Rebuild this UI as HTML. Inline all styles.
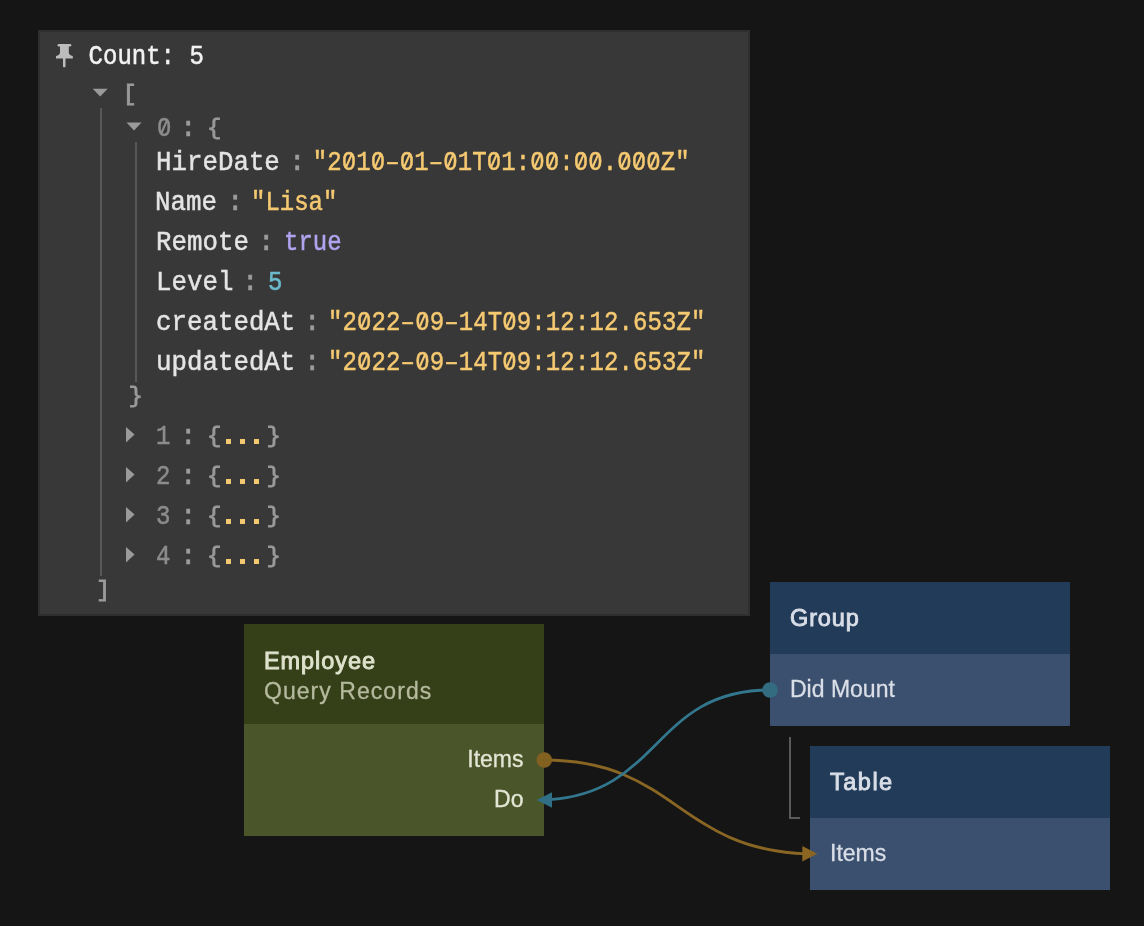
<!DOCTYPE html>
<html><head><meta charset="utf-8">
<style>
html,body{margin:0;padding:0;}
body{width:1144px;height:926px;overflow:hidden;position:relative;background:#151515;font-family:"Liberation Sans",sans-serif;}
.abs{position:absolute;}
#panel{position:absolute;left:38px;top:30px;width:712px;height:586px;box-sizing:border-box;border:2px solid #2f2f2f;background:#383838;}
.m{position:absolute;-webkit-text-stroke:0.45px currentColor;font-family:"Liberation Mono",monospace;font-size:24px;line-height:24px;white-space:pre;transform:scaleY(1.15);transform-origin:0 18.4px;}
.k{font-size:25.8px;line-height:24px;color:#e4e4e4;transform:scaleY(1.1);}
.g{color:#9a9a9a;}
.ns{transform:none;}
.c{color:#9c9c9c;font-weight:bold;}
.d{color:#8c8c8c;}
.br{transform:scaleY(0.9);-webkit-text-stroke:0.85px currentColor;}
.dot{position:absolute;width:5.2px;height:5.2px;background:#f3c870;}
.s{color:#f5c971;}
.t{color:#b0a4ef;}
.n{color:#6cbccd;}
.vl{position:absolute;width:2px;background:#585858;}
.node{position:absolute;width:300px;}
.nt{position:absolute;white-space:pre;font-family:"Liberation Sans",sans-serif;}
.tt{font-weight:normal!important;-webkit-text-stroke:0.9px currentColor;}
.pl{-webkit-text-stroke:0.3px currentColor;}
</style></head><body>
<div id="wrap" style="position:absolute;left:0;top:0;width:1144px;height:926px;will-change:transform">
<div id="panel"></div>
<!-- pin icon -->
<svg class="abs" style="left:50px;top:40px" width="30" height="30" viewBox="0 0 30 30">
  <path d="M7.2 5.2 L8.3 3.9 L20.6 3.9 L21.6 5.2 L20.6 6.5 L18.8 6.5 L18.8 12.2 Q18.9 15.6 22.8 15.9 L22.8 18.5 L15.5 18.5 L15.5 26.8 Q14.25 27.8 13 26.8 L13 18.5 L6 18.5 L6 15.9 Q9.9 15.6 10 12.2 L10 6.5 L8.3 6.5 Z" fill="#bcbcbc"/>
</svg>
<div class="m" style="left:88.6px;top:46px;color:#f2f2f2">Count: 5</div>
<!-- tri down 1 -->
<svg class="abs" style="left:92px;top:88px" width="17" height="10"><path d="M0.7 0.7 H15.7 L8.2 8.6 Z" fill="#9a9a9a"/></svg>
<div class="m g br" style="left:122.5px;top:81.5px">[</div>
<div class="vl" style="left:100px;top:108px;height:468px"></div>
<svg class="abs" style="left:126px;top:122px" width="17" height="10"><path d="M0.5 0.5 H15.5 L8 8.4 Z" fill="#9a9a9a"/></svg>
<div class="m d" style="left:157px;top:118px">0</div>
<div class="m c" style="left:181px;top:118px">:</div>
<div class="m g br" style="left:207px;top:116px">{</div>
<div class="vl" style="left:134.5px;top:142px;height:240px"></div>

<div class="m k" style="left:156px;top:152px">HireDate</div><div class="m c" style="left:290px;top:152px">:</div><div class="m s" style="left:312.7px;top:152px;letter-spacing:0.1px">"2010&#8211;01&#8211;01T01:00:00.000Z"</div>
<div class="m k" style="left:155px;top:192px">Name</div><div class="m c" style="left:228px;top:192px">:</div><div class="m s" style="left:251px;top:192px">"Lisa"</div>
<div class="m k" style="left:156px;top:232px">Remote</div><div class="m c" style="left:259px;top:232px">:</div><div class="m t" style="left:284px;top:232px">true</div>
<div class="m k" style="left:156px;top:272px">Level</div><div class="m c" style="left:243px;top:272px">:</div><div class="m n" style="left:268px;top:272px">5</div>
<div class="m k" style="left:156px;top:312px">createdAt</div><div class="m c" style="left:305px;top:312px">:</div><div class="m s" style="left:328px;top:312px;letter-spacing:0.12px">"2022&#8211;09&#8211;14T09:12:12.653Z"</div>
<div class="m k" style="left:156px;top:352px">updatedAt</div><div class="m c" style="left:305px;top:352px">:</div><div class="m s" style="left:328px;top:352px;letter-spacing:0.12px">"2022&#8211;09&#8211;14T09:12:12.653Z"</div>
<div class="m g br" style="left:128.5px;top:383.5px">}</div>

<svg class="abs" style="left:126px;top:427px" width="10" height="17"><path d="M0 0 L8.6 7.6 L0 15.4 Z" fill="#9a9a9a"/></svg>
<div class="m d" style="left:156px;top:426px">1</div><div class="m c" style="left:181px;top:426px">:</div><div class="m g br" style="left:207px;top:424px">{</div><div class="dot" style="left:225.5px;top:438.6px"></div><div class="dot" style="left:239.8px;top:438.6px"></div><div class="dot" style="left:254.3px;top:438.6px"></div><div class="m g br" style="left:266.5px;top:424px">}</div>
<svg class="abs" style="left:126px;top:467px" width="10" height="17"><path d="M0 0 L8.6 7.6 L0 15.4 Z" fill="#9a9a9a"/></svg>
<div class="m d" style="left:156px;top:466px">2</div><div class="m c" style="left:181px;top:466px">:</div><div class="m g br" style="left:207px;top:464px">{</div><div class="dot" style="left:225.5px;top:478.6px"></div><div class="dot" style="left:239.8px;top:478.6px"></div><div class="dot" style="left:254.3px;top:478.6px"></div><div class="m g br" style="left:266.5px;top:464px">}</div>
<svg class="abs" style="left:126px;top:507px" width="10" height="17"><path d="M0 0 L8.6 7.6 L0 15.4 Z" fill="#9a9a9a"/></svg>
<div class="m d" style="left:156px;top:506px">3</div><div class="m c" style="left:181px;top:506px">:</div><div class="m g br" style="left:207px;top:504px">{</div><div class="dot" style="left:225.5px;top:518.6px"></div><div class="dot" style="left:239.8px;top:518.6px"></div><div class="dot" style="left:254.3px;top:518.6px"></div><div class="m g br" style="left:266.5px;top:504px">}</div>
<svg class="abs" style="left:126px;top:547px" width="10" height="17"><path d="M0 0 L8.6 7.6 L0 15.4 Z" fill="#9a9a9a"/></svg>
<div class="m d" style="left:156px;top:546px">4</div><div class="m c" style="left:181px;top:546px">:</div><div class="m g br" style="left:207px;top:544px">{</div><div class="dot" style="left:225.5px;top:558.6px"></div><div class="dot" style="left:239.8px;top:558.6px"></div><div class="dot" style="left:254.3px;top:558.6px"></div><div class="m g br" style="left:266.5px;top:544px">}</div>
<div class="m g br" style="left:96px;top:577.5px">]</div>

<!-- slashed zeros -->
<svg class="abs" style="left:0;top:0;pointer-events:none" width="1144" height="926">
<rect x="162.20" y="123.90" width="4.2" height="5.2" fill="#383838"/>
<line x1="161.50" y1="133.00" x2="167.10" y2="120.10" stroke="#8c8c8c" stroke-width="2.1"/>
<rect x="346.89" y="157.90" width="4.2" height="5.2" fill="#383838"/>
<line x1="346.19" y1="167.00" x2="351.79" y2="154.10" stroke="#f5c971" stroke-width="2.1"/>
<rect x="375.89" y="157.90" width="4.2" height="5.2" fill="#383838"/>
<line x1="375.19" y1="167.00" x2="380.79" y2="154.10" stroke="#f5c971" stroke-width="2.1"/>
<rect x="404.89" y="157.90" width="4.2" height="5.2" fill="#383838"/>
<line x1="404.19" y1="167.00" x2="409.79" y2="154.10" stroke="#f5c971" stroke-width="2.1"/>
<rect x="448.40" y="157.90" width="4.2" height="5.2" fill="#383838"/>
<line x1="447.70" y1="167.00" x2="453.30" y2="154.10" stroke="#f5c971" stroke-width="2.1"/>
<rect x="491.90" y="157.90" width="4.2" height="5.2" fill="#383838"/>
<line x1="491.20" y1="167.00" x2="496.80" y2="154.10" stroke="#f5c971" stroke-width="2.1"/>
<rect x="535.42" y="157.90" width="4.2" height="5.2" fill="#383838"/>
<line x1="534.72" y1="167.00" x2="540.32" y2="154.10" stroke="#f5c971" stroke-width="2.1"/>
<rect x="549.92" y="157.90" width="4.2" height="5.2" fill="#383838"/>
<line x1="549.22" y1="167.00" x2="554.82" y2="154.10" stroke="#f5c971" stroke-width="2.1"/>
<rect x="578.92" y="157.90" width="4.2" height="5.2" fill="#383838"/>
<line x1="578.22" y1="167.00" x2="583.82" y2="154.10" stroke="#f5c971" stroke-width="2.1"/>
<rect x="593.42" y="157.90" width="4.2" height="5.2" fill="#383838"/>
<line x1="592.72" y1="167.00" x2="598.32" y2="154.10" stroke="#f5c971" stroke-width="2.1"/>
<rect x="622.43" y="157.90" width="4.2" height="5.2" fill="#383838"/>
<line x1="621.73" y1="167.00" x2="627.33" y2="154.10" stroke="#f5c971" stroke-width="2.1"/>
<rect x="636.93" y="157.90" width="4.2" height="5.2" fill="#383838"/>
<line x1="636.23" y1="167.00" x2="641.83" y2="154.10" stroke="#f5c971" stroke-width="2.1"/>
<rect x="651.43" y="157.90" width="4.2" height="5.2" fill="#383838"/>
<line x1="650.73" y1="167.00" x2="656.33" y2="154.10" stroke="#f5c971" stroke-width="2.1"/>
<rect x="362.23" y="317.90" width="4.2" height="5.2" fill="#383838"/>
<line x1="361.53" y1="327.00" x2="367.13" y2="314.10" stroke="#f5c971" stroke-width="2.1"/>
<rect x="420.32" y="317.90" width="4.2" height="5.2" fill="#383838"/>
<line x1="419.62" y1="327.00" x2="425.23" y2="314.10" stroke="#f5c971" stroke-width="2.1"/>
<rect x="507.47" y="317.90" width="4.2" height="5.2" fill="#383838"/>
<line x1="506.77" y1="327.00" x2="512.37" y2="314.10" stroke="#f5c971" stroke-width="2.1"/>
<rect x="362.23" y="357.90" width="4.2" height="5.2" fill="#383838"/>
<line x1="361.53" y1="367.00" x2="367.13" y2="354.10" stroke="#f5c971" stroke-width="2.1"/>
<rect x="420.32" y="357.90" width="4.2" height="5.2" fill="#383838"/>
<line x1="419.62" y1="367.00" x2="425.23" y2="354.10" stroke="#f5c971" stroke-width="2.1"/>
<rect x="507.47" y="357.90" width="4.2" height="5.2" fill="#383838"/>
<line x1="506.77" y1="367.00" x2="512.37" y2="354.10" stroke="#f5c971" stroke-width="2.1"/>
</svg>
<!-- Employee node -->
<div class="abs" style="left:244px;top:624px;width:300px;height:100px;background:#353f18"></div>
<div class="abs" style="left:244px;top:724px;width:300px;height:112px;background:#4a552a"></div>
<div class="nt tt" style="left:264px;top:647.5px;font-size:23.5px;letter-spacing:0.93px;color:#dfe2cd">Employee</div>
<div class="nt pl" style="left:264px;top:678px;font-size:23px;letter-spacing:1.05px;color:#b5b99d">Query Records</div>
<div class="nt pl" style="left:400px;top:746px;width:123.5px;text-align:right;font-size:23px;color:#e3e6d4">Items</div>
<div class="nt pl" style="left:400px;top:786px;width:123.5px;text-align:right;font-size:23px;color:#e3e6d4">Do</div>

<!-- Group node -->
<div class="abs" style="left:770px;top:582px;width:300px;height:72px;background:#223b59"></div>
<div class="abs" style="left:770px;top:654px;width:300px;height:72px;background:#3b506e"></div>
<div class="nt tt" style="left:790px;top:605px;font-size:23.5px;letter-spacing:0.85px;color:#d9dee7">Group</div>
<div class="nt pl" style="left:790px;top:675.5px;font-size:23px;color:#d9dee7">Did Mount</div>

<!-- Table node -->
<div class="abs" style="left:810px;top:746px;width:300px;height:72px;background:#223b59"></div>
<div class="abs" style="left:810px;top:818px;width:300px;height:72px;background:#3b506e"></div>
<div class="nt tt" style="left:830px;top:769px;font-size:23.5px;letter-spacing:1.5px;color:#d9dee7">Table</div>
<div class="nt pl" style="left:830px;top:840px;font-size:23px;color:#d9dee7">Items</div>

<!-- bracket -->
<div class="abs" style="left:789px;top:736.5px;width:2px;height:82px;background:#5a5a5a"></div>
<div class="abs" style="left:789px;top:816.5px;width:11px;height:2px;background:#5a5a5a"></div>

<!-- connections -->
<svg class="abs" style="left:0;top:0" width="1144" height="926">
  <path d="M544 760 C675.37 760 677.01 849.01 806 853.8" fill="none" stroke="#896623" stroke-width="2.8"/>
  <path d="M770 690 C653.98 690 661.35 792.82 549 799.64" fill="none" stroke="#33778e" stroke-width="2.8"/>
  <circle cx="770" cy="690" r="7.8" fill="#336c80"/>
  <circle cx="544.3" cy="760" r="7.8" fill="#82601f"/>
  <path d="M536.7 800 L552 792.3 L552 807.7 Z" fill="#306f86"/>
  <path d="M817.3 853.8 L802.3 846 L802.3 861.6 Z" fill="#8a6622"/>
</svg>
</div>
</body></html>
